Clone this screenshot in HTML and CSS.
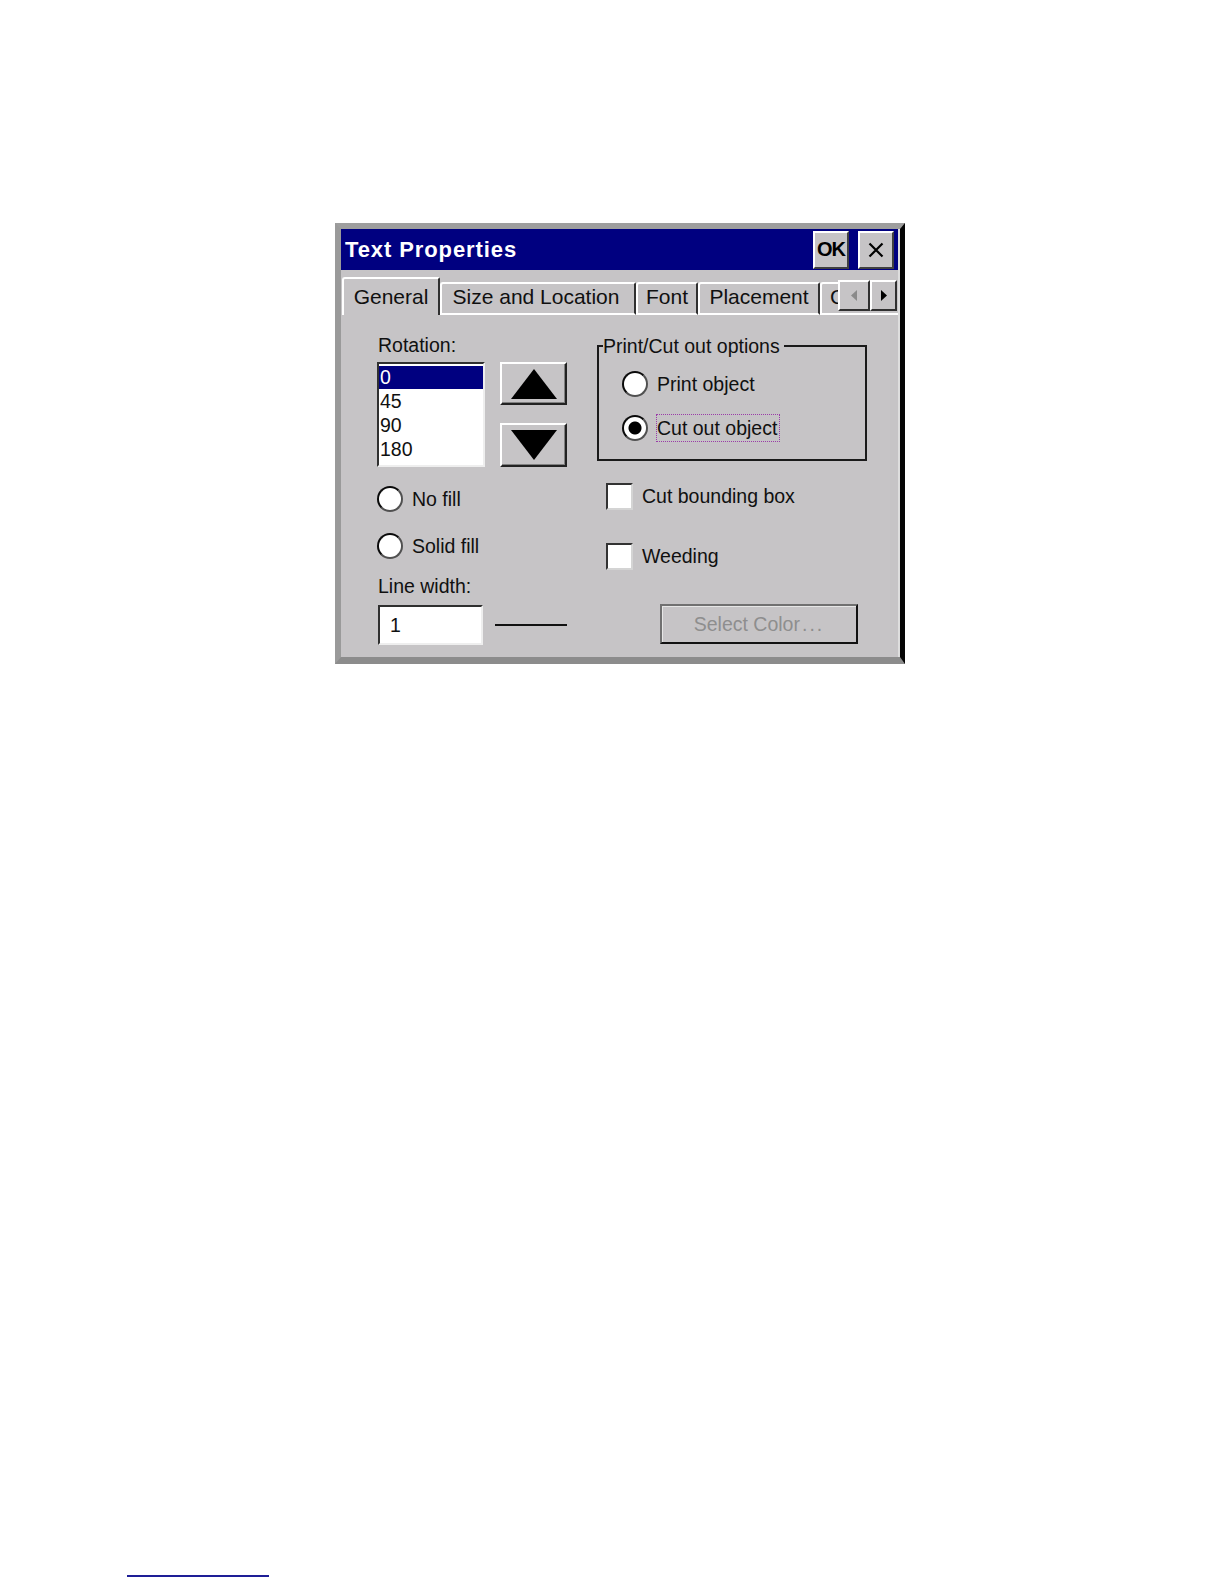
FILE: index.html
```html
<!DOCTYPE html>
<html>
<head>
<meta charset="utf-8">
<title>Text Properties</title>
<link rel="stylesheet" href="styles.css">
</head>
<body>
<div class="dialog">
  <div class="inner">
    <div class="titlebar">
      <span class="title">Text Properties</span>
      <div class="tbtn ok">OK</div>
      <div class="tbtn close">
        <svg width="16" height="16" viewBox="0 0 16 16"><path d="M1.5 1.5 L14.5 14.5 M14.5 1.5 L1.5 14.5" stroke="#000" stroke-width="2.2" fill="none"/></svg>
      </div>
    </div>
    <div class="tabrow">
      <div class="tabs">
        <div class="tab active t-gen">General</div>
        <div class="tab t-size">Size and Location</div>
        <div class="tab t-font">Font</div>
        <div class="tab t-place">Placement</div>
        <div class="tab t-color">Color</div>
      </div>
      <div class="scroll">
        <div class="sbtn sleft">
          <svg width="6" height="11" viewBox="0 0 6 11"><path d="M6 0 L0 5.5 L6 11 Z" fill="#8a8a8a"/></svg>
        </div>
        <div class="sbtn sright">
          <svg width="6" height="11" viewBox="0 0 6 11"><path d="M0 0 L6 5.5 L0 11 Z" fill="#000"/></svg>
        </div>
      </div>
    </div>
    <div class="page">
      <div class="col-left">
        <div class="label">Rotation:</div>
        <div class="rot-row">
          <div class="listbox">
            <div class="item sel">0</div>
            <div class="item">45</div>
            <div class="item">90</div>
            <div class="item">180</div>
          </div>
          <div class="spins">
            <div class="spin up">
              <svg width="46" height="30" viewBox="0 0 46 30"><path d="M23 0 L46 30 L0 30 Z" fill="#000"/></svg>
            </div>
            <div class="spin down">
              <svg width="46" height="30" viewBox="0 0 46 30"><path d="M0 0 L46 0 L23 30 Z" fill="#000"/></svg>
            </div>
          </div>
        </div>
        <div class="radiorow first">
          <span class="radio"></span><span class="rtext">No fill</span>
        </div>
        <div class="radiorow second">
          <span class="radio"></span><span class="rtext">Solid fill</span>
        </div>
        <div class="label lw">Line width:</div>
        <div class="lw-row">
          <div class="textbox">1</div>
          <div class="linesample"></div>
        </div>
      </div>
      <div class="col-right">
        <fieldset class="group">
          <legend>Print/Cut out options</legend>
          <div class="gradios">
            <div class="grow">
              <span class="radio"></span><span class="rlabel">Print object</span>
            </div>
            <div class="grow">
              <span class="radio checked"></span><span class="rlabel focus">Cut out object</span>
            </div>
          </div>
        </fieldset>
        <div class="checkrow c1">
          <span class="check"></span><span class="ctext">Cut bounding box</span>
        </div>
        <div class="checkrow c2">
          <span class="check"></span><span class="ctext">Weeding</span>
        </div>
        <div class="selbtn">Select Color<span class="dots">...</span></div>
      </div>
    </div>
  </div>
</div>
<div class="footline"></div>
</body>
</html>
```

FILE: styles.css
```css
html, body {
  margin: 0;
  padding: 0;
  background: #ffffff;
}

body {
  font-family: "Liberation Sans", Arial, sans-serif;
  color: #101010;
}

.dialog {
  margin: 223px 0 0 335px;
  width: 570px;
  box-sizing: border-box;
  border-left: 6px solid #9a9a9a;
  border-top: 6px solid #9e9e9e;
  border-right: 5px solid #050505;
  border-bottom: 7px solid #8c8c8c;
  background: #c6c4c6;
}

.inner {
  border-right: 2px solid #dedede;
}

/* Title bar */
.titlebar {
  height: 41px;
  background: #000080;
  display: flex;
  align-items: center;
  padding: 0 4px 0 4px;
  gap: 9px;
}

.title {
  flex: 1;
  color: #ffffff;
  font-weight: bold;
  font-size: 22px;
  letter-spacing: 0.9px;
}

.tbtn {
  width: 36px;
  height: 38px;
  box-sizing: border-box;
  background: #c6c4c6;
  border: 2px solid;
  border-color: #ffffff #404040 #404040 #ffffff;
  display: flex;
  align-items: center;
  justify-content: center;
  color: #000;
}

.tbtn.ok {
  font-weight: bold;
  font-size: 20px;
  letter-spacing: -1px;
}

/* Tabs */
.tabrow {
  height: 45px;
  display: flex;
  align-items: flex-end;
  padding-left: 1px;
}

.tabs {
  width: 496px;
  height: 38px;
  display: flex;
  align-items: flex-end;
  overflow: hidden;
  flex-shrink: 0;
}

.tab {
  flex-shrink: 0;
  box-sizing: border-box;
  height: 33px;
  border-top: 2px solid #ffffff;
  border-left: 2px solid #ffffff;
  border-right: 2px solid #303030;
  border-bottom: 2px solid #ffffff;
  border-top-left-radius: 3px;
  border-top-right-radius: 2px;
  font-size: 21px;
  line-height: 26px;
  text-align: center;
  white-space: nowrap;
  color: #101010;
}

.tab.active {
  height: 38px;
  border-bottom: none;
  line-height: 36px;
}

.t-gen { width: 98px; }
.t-size { width: 196px; padding-right: 4px; }
.t-font { width: 62px; }
.t-place { width: 122px; }
.t-color { width: 80px; text-align: left; padding-left: 8px; }

.scroll {
  display: flex;
  border-bottom: 2px solid #ffffff;
  padding-bottom: 2px;
  flex: 1;
}

.sbtn {
  height: 31px;
  box-sizing: border-box;
  border: 2px solid;
  border-color: #ffffff #303030 #303030 #ffffff;
  display: flex;
  align-items: center;
  justify-content: center;
}

.sleft { width: 32px; }
.sright { width: 27px; }

/* Page */
.page {
  height: 342px;
  box-sizing: border-box;
  padding: 19px 0 0 37px;
  display: flex;
  font-size: 19.5px;
}

.col-left {
  width: 219px;
  flex-shrink: 0;
}

.label {
  height: 22px;
  line-height: 22px;
}

.rot-row {
  margin-top: 6px;
  display: flex;
  margin-left: -1px;
}

.listbox {
  width: 108px;
  height: 105px;
  box-sizing: border-box;
  background: #ffffff;
  border: 2px solid;
  border-color: #303030 #eeeeee #eeeeee #303030;
  padding-top: 2px;
}

.item {
  height: 24px;
  line-height: 24px;
  padding-left: 1px;
}

.item.sel {
  height: 23px;
  line-height: 23px;
  background: #000080;
  color: #ffffff;
}

.spins {
  margin-left: 15px;
  display: flex;
  flex-direction: column;
  gap: 18px;
}

.spin {
  width: 67px;
  box-sizing: border-box;
  border: 2px solid;
  border-color: #ffffff #222222 #222222 #ffffff;
  box-shadow: inset -1px -1px 0 #808080;
  display: flex;
  align-items: center;
  justify-content: center;
}

.spin.up { height: 43px; }
.spin.down { height: 44px; }

.radiorow {
  display: flex;
  align-items: center;
  gap: 9px;
  height: 26px;
  margin-left: -1px;
}

.radiorow.first { margin-top: 19px; }
.radiorow.second { margin-top: 21px; }

.radio {
  width: 26px;
  height: 26px;
  box-sizing: border-box;
  border-radius: 50%;
  background: #ffffff;
  border: 2.5px solid #0a0a0a;
  border-right-color: #505050;
  border-bottom-color: #505050;
  flex-shrink: 0;
}

.radio.checked {
  background: radial-gradient(circle, #000000 0 6px, #ffffff 7px);
}

.label.lw { margin-top: 16px; }

.lw-row {
  margin-top: 8px;
  display: flex;
  align-items: center;
}

.textbox {
  width: 105px;
  height: 40px;
  box-sizing: border-box;
  background: #ffffff;
  border: 2px solid;
  border-color: #303030 #eeeeee #eeeeee #303030;
  padding-left: 10px;
  line-height: 36px;
}

.linesample {
  width: 72px;
  height: 2px;
  background: #111111;
  margin-left: 12px;
}

/* Right column */
.col-right {
  flex: 1;
}

.group {
  margin: 1px 0 0 0;
  width: 270px;
  min-width: 0;
  box-sizing: border-box;
  border: 2px solid #1a1a1a;
  padding: 14px 0 18px 23px;
}

.group legend {
  padding: 0 4px 0 0;
  margin-left: -19px;
  line-height: 22px;
  font-size: 19.5px;
}

.gradios {
  display: flex;
  flex-direction: column;
  gap: 18px;
}

.grow {
  display: flex;
  align-items: center;
  gap: 8px;
  height: 26px;
}

.rlabel {
  padding: 2px 2px 2px 0;
  line-height: 22px;
  border: 1px dotted transparent;
}

.rlabel.focus {
  border-color: #9a3ca8;
}

.checkrow {
  display: flex;
  align-items: center;
  gap: 9px;
  margin-left: 9px;
  height: 27px;
}

.checkrow.c1 { margin-top: 22px; }
.checkrow.c2 { margin-top: 33px; }

.check {
  width: 27px;
  height: 27px;
  box-sizing: border-box;
  background: #ffffff;
  border: 2px solid;
  border-color: #333333 #d4d4d4 #d4d4d4 #333333;
  flex-shrink: 0;
}

.selbtn {
  margin: 34px 0 0 63px;
  width: 198px;
  height: 40px;
  box-sizing: border-box;
  border: 2px solid;
  border-color: #707070 #111111 #111111 #707070;
  box-shadow: inset 1px 1px 0 #e6e6e6;
  color: #8e8e8e;
  display: flex;
  align-items: center;
  justify-content: center;
}

.dots {
  letter-spacing: 2px;
  margin-left: 2px;
}

/* Footer rule */
.footline {
  margin: 911px 0 0 127px;
  width: 142px;
  height: 2px;
  background: #1e1e96;
}
```
